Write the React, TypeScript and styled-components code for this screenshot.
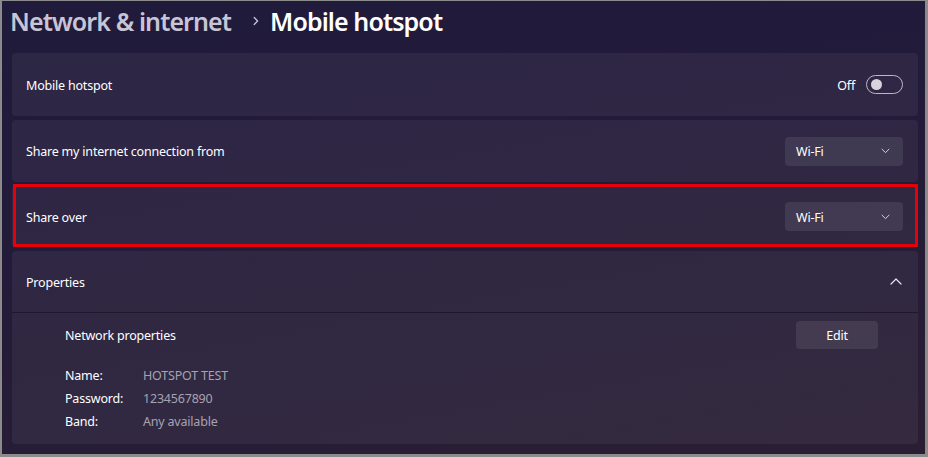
import React from "react";
import styled, { createGlobalStyle } from "styled-components";

const Global = createGlobalStyle`
  html, body { margin: 0; padding: 0; background: #8b8b8b; }
  body { width: 928px; height: 457px; overflow: hidden; }
  #root { width: 928px; height: 457px; }
`;

const Frame = styled.div`
  box-sizing: border-box;
  width: 928px;
  height: 457px;
  padding: 1px 3px 3px 2px;
  background: #8b8b8b;
`;

const Window = styled.div`
  box-sizing: border-box;
  width: 100%;
  height: 100%;
  background: linear-gradient(170deg, #201a3c 0%, #231b39 45%, #2a1e33 100%);
  padding: 0 7px 0 10px;
  display: flex;
  flex-direction: column;
  font-family: "Noto Sans", "Open Sans", sans-serif;
  color: #ffffff;
`;

const Header = styled.div`
  height: 52px;
  display: flex;
  align-items: flex-start;
  padding-top: 3px;
  margin-left: -2px;
  box-sizing: border-box;
  font-size: 25px;
  font-weight: 600;
  letter-spacing: -0.9px;
`;

const Crumb = styled.span<{ $current?: boolean }>`
  color: ${(p) => (p.$current ? "#ffffff" : "#c8c5d4")};
  line-height: 34px;
`;

const CrumbSep = styled.span`
  display: flex;
  align-items: center;
  height: 34px;
  padding: 0 11px 0 22px;
`;

const List = styled.div`
  display: flex;
  flex-direction: column;
  gap: 4px;
`;

const Card = styled.div<{ $height: number; $highlight?: boolean }>`
  box-sizing: border-box;
  height: ${(p) => p.$height}px;
  background: rgba(255, 255, 255, 0.055);
  border-radius: 4px;
  display: flex;
  align-items: center;
  justify-content: space-between;
  padding: 0 15px 0 14px;
  position: relative;
  ${(p) =>
    p.$highlight &&
    `&::after {
      content: "";
      position: absolute;
      top: -2px;
      left: 1px;
      right: 0;
      bottom: 0;
      border: 3px solid #e6000a;
      pointer-events: none;
    }`}
`;

const Label = styled.span`
  color: #ffffff;
  font-size: 12.5px;
  letter-spacing: -0.2px;
  line-height: 18px;
  padding-top: 2px;
`;

const Right = styled.div`
  display: flex;
  align-items: center;
  gap: 11px;
`;

const Toggle = styled.div`
  box-sizing: border-box;
  width: 37px;
  height: 19px;
  border: 1px solid #bdb8c7;
  border-radius: 10px;
  display: flex;
  align-items: center;
  padding-left: 4px;
`;

const Knob = styled.div`
  width: 11px;
  height: 11px;
  border-radius: 50%;
  background: #d8d4de;
`;

const Dropdown = styled.div`
  box-sizing: border-box;
  width: 118px;
  height: 29px;
  border-radius: 4px;
  background: rgba(255, 255, 255, 0.085);
  display: flex;
  align-items: center;
  justify-content: space-between;
  padding: 0 13px 0 11px;
`;

const Props = styled.div`
  box-sizing: border-box;
  height: 193px;
  background: rgba(255, 255, 255, 0.055);
  border-radius: 4px;
  display: flex;
  flex-direction: column;
`;

const PropsHead = styled.div`
  height: 61px;
  display: flex;
  align-items: center;
  justify-content: space-between;
  padding: 0 16px 0 14px;
  border-bottom: 1px solid #1e182c;
`;

const PropsBody = styled.div`
  display: flex;
  flex-direction: column;
  padding: 8px 40px 0 53px;
`;

const PropsTop = styled.div`
  display: flex;
  align-items: center;
  justify-content: space-between;
  height: 28px;
  margin-bottom: 14px;
`;

const EditButton = styled.div`
  box-sizing: border-box;
  width: 82px;
  height: 28px;
  border-radius: 4px;
  background: rgba(255, 255, 255, 0.085);
  display: flex;
  align-items: center;
  justify-content: center;
`;

const InfoGrid = styled.div`
  display: grid;
  grid-template-columns: 78px auto;
  grid-auto-rows: 23px;
  align-items: center;
`;

const Value = styled(Label)`
  color: #a7a2b2;
`;

const ChevronDown = () => (
  <svg width="9" height="6" viewBox="0 0 9 6" fill="none">
    <path d="M1 1.2 L4.5 4.6 L8 1.2" stroke="#d6d2de" strokeWidth="1" strokeLinecap="round" strokeLinejoin="round" />
  </svg>
);

const ChevronUp = () => (
  <svg width="12" height="7" viewBox="0 0 12 7" fill="none">
    <path d="M1 6 L6 1 L11 6" stroke="#e6e3ec" strokeWidth="1.2" strokeLinecap="round" strokeLinejoin="round" />
  </svg>
);

const ChevronRight = () => (
  <svg width="6" height="10" viewBox="0 0 6 10" fill="none">
    <path d="M1.2 1.5 L4.6 5 L1.2 8.5" stroke="#c8c5d4" strokeWidth="1.3" strokeLinecap="round" strokeLinejoin="round" />
  </svg>
);

export default function App() {
  return (
    <>
      <Global />
      <Frame>
        <Window>
          <Header>
            <Crumb>Network &amp; internet</Crumb>
            <CrumbSep>
              <ChevronRight />
            </CrumbSep>
            <Crumb $current>Mobile hotspot</Crumb>
          </Header>
          <List>
            <Card $height={63}>
              <Label>Mobile hotspot</Label>
              <Right>
                <Label>Off</Label>
                <Toggle>
                  <Knob />
                </Toggle>
              </Right>
            </Card>
            <Card $height={62}>
              <Label>Share my internet connection from</Label>
              <Dropdown>
                <Label>Wi-Fi</Label>
                <ChevronDown />
              </Dropdown>
            </Card>
            <Card $height={61} $highlight>
              <Label>Share over</Label>
              <Dropdown>
                <Label>Wi-Fi</Label>
                <ChevronDown />
              </Dropdown>
            </Card>
            <Props>
              <PropsHead>
                <Label>Properties</Label>
                <ChevronUp />
              </PropsHead>
              <PropsBody>
                <PropsTop>
                  <Label>Network properties</Label>
                  <EditButton>
                    <Label>Edit</Label>
                  </EditButton>
                </PropsTop>
                <InfoGrid>
                  <Label>Name:</Label>
                  <Value>HOTSPOT TEST</Value>
                  <Label>Password:</Label>
                  <Value>1234567890</Value>
                  <Label>Band:</Label>
                  <Value>Any available</Value>
                </InfoGrid>
              </PropsBody>
            </Props>
          </List>
        </Window>
      </Frame>
    </>
  );
}
